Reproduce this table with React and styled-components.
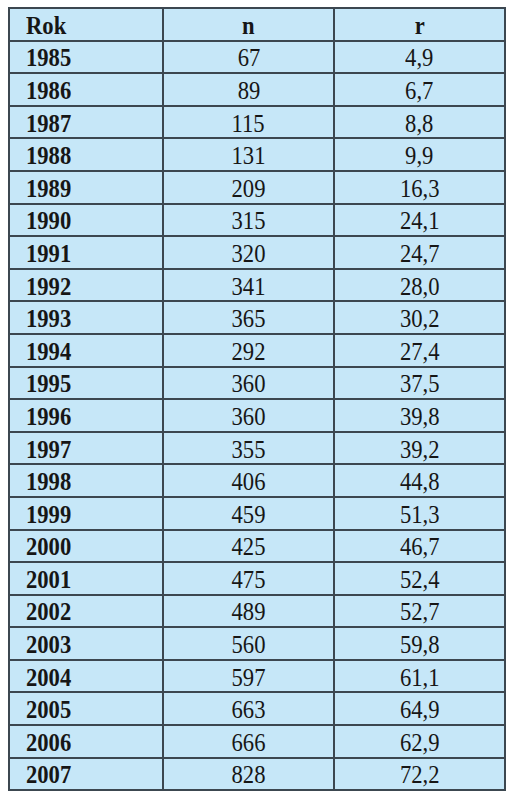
import React from "react";
import styled, { createGlobalStyle } from "styled-components";

const Global = createGlobalStyle`
  html, body { margin: 0; padding: 0; background: #ffffff; }
  body { font-family: "Liberation Serif", "Times New Roman", serif; }
`;

const Wrap = styled.div`
  padding: 7px 7px 0 8px;
`;

const Table = styled.table`
  width: 496px;
  border-collapse: collapse;
  background: #c6e7f8;
  border: 2px solid #3c4750;
  table-layout: fixed;
  font-family: "Liberation Serif", "Times New Roman", serif;
  color: #161616;
`;

const Cell = styled.td`
  height: 32.6px;
  box-sizing: border-box;
  padding: 3px 0 0 ${(p) => (p.$left ? "16px" : "0")};
  border: 2px solid #3c4750;
  text-align: ${(p) => (p.$left ? "left" : "center")};
  font-size: 26px;
  font-weight: ${(p) => (p.$bold ? 700 : 400)};
  line-height: 22px;
  vertical-align: middle;
  white-space: nowrap;
`;

const Txt = styled.span`
  display: inline-block;
  line-height: 22px;
  vertical-align: top;
  transform: scaleX(0.87);
  transform-origin: ${(p) => (p.$left ? "left center" : "center center")};
`;

const data = [
  ["1985", "67", "4,9"],
  ["1986", "89", "6,7"],
  ["1987", "115", "8,8"],
  ["1988", "131", "9,9"],
  ["1989", "209", "16,3"],
  ["1990", "315", "24,1"],
  ["1991", "320", "24,7"],
  ["1992", "341", "28,0"],
  ["1993", "365", "30,2"],
  ["1994", "292", "27,4"],
  ["1995", "360", "37,5"],
  ["1996", "360", "39,8"],
  ["1997", "355", "39,2"],
  ["1998", "406", "44,8"],
  ["1999", "459", "51,3"],
  ["2000", "425", "46,7"],
  ["2001", "475", "52,4"],
  ["2002", "489", "52,7"],
  ["2003", "560", "59,8"],
  ["2004", "597", "61,1"],
  ["2005", "663", "64,9"],
  ["2006", "666", "62,9"],
  ["2007", "828", "72,2"],
];

export default function App() {
  return (
    <>
      <Global />
      <Wrap>
        <Table>
          <colgroup>
            <col style={{ width: "154px" }} />
            <col style={{ width: "171px" }} />
            <col style={{ width: "171px" }} />
          </colgroup>
          <thead>
            <tr>
              <Cell as="th" $left $bold><Txt $left>Rok</Txt></Cell>
              <Cell as="th" $bold><Txt>n</Txt></Cell>
              <Cell as="th" $bold><Txt>r</Txt></Cell>
            </tr>
          </thead>
          <tbody>
            {data.map(([y, n, r]) => (
              <tr key={y}>
                <Cell $left $bold><Txt $left>{y}</Txt></Cell>
                <Cell><Txt>{n}</Txt></Cell>
                <Cell><Txt>{r}</Txt></Cell>
              </tr>
            ))}
          </tbody>
        </Table>
      </Wrap>
    </>
  );
}
